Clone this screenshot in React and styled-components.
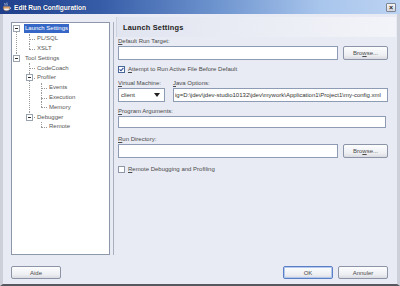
import React from "react";
import styled, { createGlobalStyle } from "styled-components";

const GlobalStyle = createGlobalStyle`
  html, body {
    margin: 0;
    padding: 0;
    background: #e8ebf4;
  }
  body {
    font-family: "Liberation Sans", Arial, sans-serif;
  }
`;

const Window = styled.div`
  width: 400px;
  height: 286px;
  display: flex;
  flex-direction: column;
  overflow: hidden;
  background: #e8ebf4;
`;

const TitleBar = styled.div`
  height: 14px;
  flex: none;
  display: flex;
  align-items: center;
  gap: 2px;
  padding: 0 4px 0 2px;
  background: linear-gradient(to right, #1f3f8b 0%, #365ca8 25%, #7096d0 55%, #a8c5ec 80%, #bcd3f2 100%);
  color: #fff;
  font-weight: bold;
  font-size: 6.6px;
`;

const Title = styled.span`
  flex: 1;
  text-shadow: 0 0 1px #0d2458;
`;

const CloseButton = styled.span`
  width: 10px;
  height: 9px;
  box-sizing: border-box;
  display: flex;
  align-items: center;
  justify-content: center;
  border: 1px solid #7d8594;
  border-radius: 1px;
  background: linear-gradient(#f4f4f4, #d6d8de);
  color: #222;
  font-size: 7px;
  font-weight: bold;
  line-height: 1;
`;

const Frame = styled.div`
  flex: 1;
  display: flex;
  flex-direction: column;
  border-left: 3px solid #cdd0d8;
  border-right: 3px solid #cdd0d8;
  border-bottom: 2px solid #55585f;
`;

const Body = styled.div`
  flex: 1;
  display: flex;
  padding-left: 8px;
  padding-right: 1px;
`;

const TreeBox = styled.div`
  width: 99px;
  height: 233px;
  margin-top: 8px;
  box-sizing: border-box;
  padding-top: 1px;
  background: #fff;
  border: 1px solid #8d97aa;
  font-size: 6px;
  color: #555;
`;

const Branches = styled.ul`
  list-style: none;
  margin: 0;
  padding: 0 0 0 ${(p) => p.$indent}px;
`;

const Item = styled.li`
  position: relative;

  &::before {
    content: "";
    position: absolute;
    left: 0;
    top: 0;
    bottom: 0;
    border-left: 1px dotted #9a9a9a;
  }

  &:first-child::before {
    top: ${(p) => (p.$root ? "5px" : "0")};
  }

  &:last-child::before {
    bottom: auto;
    height: 5px;
  }

  &::after {
    content: "";
    display: ${(p) => (p.$root ? "none" : "block")};
    position: absolute;
    left: 0;
    top: 5px;
    width: 6px;
    border-top: 1px dotted #9a9a9a;
  }
`;

const Row = styled.div`
  height: 9.8px;
  display: flex;
  align-items: center;
  padding-left: ${(p) => p.$pad}px;
  white-space: nowrap;
`;

const Toggle = styled.span`
  position: relative;
  z-index: 1;
  flex: none;
  box-sizing: border-box;
  width: 7px;
  height: 7px;
  margin-left: -3px;
  margin-right: ${(p) => p.$gap}px;
  background: #fff;
  border: 1px solid #9aa3b0;

  &::after {
    content: "";
    position: absolute;
    left: 1px;
    right: 1px;
    top: 2px;
    height: 1px;
    background: #2c2c2c;
  }
`;

const NodeLabel = styled.span`
  position: relative;
  z-index: 1;
  height: 9px;
  line-height: 9px;
  padding: 0 1px;
  margin-left: -1px;
  background: ${(p) => (p.$selected ? "#3667c6" : "transparent")};
  color: ${(p) => (p.$selected ? "#fff" : "inherit")};
`;

const Splitter = styled.div`
  width: 6px;
  flex: none;
  display: flex;
  justify-content: center;

  &::before {
    content: "";
    width: 1px;
    margin-top: 8px;
    height: 233px;
    background: #a8afbd;
  }
`;

const Content = styled.div`
  flex: 1;
  display: flex;
  flex-direction: column;
  padding-top: 3px;
`;

const Header = styled.div`
  height: 20px;
  display: flex;
  align-items: center;
  padding-left: 6px;
  border-left: 1px solid #cdd2de;
  background: linear-gradient(to right, #e1e5f0, #f3f4f9);
  font-size: 7.4px;
  font-weight: bold;
  color: #1d1d1d;
  letter-spacing: 0.2px;
`;

const Form = styled.div`
  display: flex;
  flex-direction: column;
  padding: 0 8px 0 2px;
  font-size: 6px;
  color: #4a4a4a;
`;

const Label = styled.div`
  height: 8px;
  line-height: 8px;
  margin-top: ${(p) => p.$top || 0}px;
  white-space: nowrap;
`;

const FieldRow = styled.div`
  display: flex;
  gap: 5px;
  margin-top: 1px;
`;

const TextBox = styled.div`
  flex: 1;
  min-width: 0;
  height: ${(p) => p.$h || 14}px;
  box-sizing: border-box;
  margin-right: ${(p) => p.$inset || 0}px;
  display: flex;
  align-items: center;
  padding: 0 1px;
  overflow: hidden;
  white-space: nowrap;
  background: #fff;
  border: 1px solid #8e9bb4;
  color: #333;
`;

const Button = styled.div`
  width: ${(p) => p.$w || 50}px;
  height: ${(p) => p.$h || 13}px;
  flex: none;
  box-sizing: border-box;
  display: flex;
  align-items: center;
  justify-content: center;
  border: 1px solid ${(p) => (p.$primary ? "#5b7fc5" : "#8b95a7")};
  border-radius: 2px;
  box-shadow: ${(p) => (p.$primary ? "inset 0 0 0 1px #b3c8ec" : "none")};
  background: linear-gradient(#fdfdfe, #eceef2 70%, #d9dbe1);
  color: #4a4a4a;
  font-size: 6px;
`;

const CheckRow = styled.div`
  height: 10px;
  display: flex;
  align-items: center;
  gap: 3px;
  margin-top: ${(p) => p.$top}px;
  white-space: nowrap;
`;

const Check = styled.span`
  width: 7px;
  height: 7px;
  flex: none;
  box-sizing: border-box;
  display: flex;
  align-items: center;
  justify-content: center;
  background: #fff;
  border: 1px solid ${(p) => (p.$checked ? "#4a679a" : "#8d97a8")};
`;

const Columns = styled.div`
  display: grid;
  grid-template-columns: 47px 1fr;
  column-gap: 8px;
  margin-top: ${(p) => p.$top || 0}px;
`;

const Select = styled(TextBox)`
  justify-content: space-between;
  padding: 0 4px 0 2px;

  &::after {
    content: "";
    border-left: 3.5px solid transparent;
    border-right: 3.5px solid transparent;
    border-top: 4px solid #222;
  }
`;

const Footer = styled.div`
  height: 29px;
  flex: none;
  box-sizing: border-box;
  display: flex;
  gap: 5px;
  padding: 11px 9px 0 8px;
`;

const Spacer = styled.div`
  flex: 1;
`;

const tree = [
  {
    label: "Launch Settings",
    selected: true,
    children: [{ label: "PL/SQL" }, { label: "XSLT" }],
  },
  {
    label: "Tool Settings",
    children: [
      { label: "CodeCoach" },
      {
        label: "Profiler",
        children: [{ label: "Events" }, { label: "Execution" }, { label: "Memory" }],
      },
      { label: "Debugger", children: [{ label: "Remote" }] },
    ],
  },
];

const TreeNode = ({ node, root }) => {
  const textAt = root ? 9 : 8;
  const branch = node.children && node.children.length > 0;
  return (
    <Item $root={root}>
      <Row $pad={branch ? 0 : textAt}>
        {branch && <Toggle $gap={textAt - 4} />}
        <NodeLabel $selected={node.selected}>{node.label}</NodeLabel>
      </Row>
      {branch && (
        <Branches $indent={textAt + 4}>
          {node.children.map((child) => (
            <TreeNode key={child.label} node={child} />
          ))}
        </Branches>
      )}
    </Item>
  );
};

const CupIcon = () => (
  <svg width="10" height="10" viewBox="0 0 10 10">
    <path d="M3 1 C2.4 2 3.6 2.6 3 3.6 M5 0.6 C4.4 1.8 5.6 2.4 5 3.6" stroke="#e8eefc" strokeWidth="0.7" fill="none" />
    <path d="M1.5 4.5 H7.5 V6.6 C7.5 8 6.3 8.8 4.5 8.8 C2.7 8.8 1.5 8 1.5 6.6 Z" fill="#f2f2f2" stroke="#8a5a2a" strokeWidth="0.5" />
    <path d="M7.5 5.2 C9 5.2 9 7.2 7.3 7.2" stroke="#f2f2f2" strokeWidth="0.8" fill="none" />
    <rect x="1.6" y="5.3" width="5.8" height="1.1" fill="#d0782c" />
  </svg>
);

const Tick = () => (
  <svg width="5" height="5" viewBox="0 0 5 5">
    <path d="M0.6 2.4 L2 3.8 L4.4 0.9" stroke="#27478f" strokeWidth="1.1" fill="none" />
  </svg>
);

const App = () => (
  <>
    <GlobalStyle />
    <Window>
      <TitleBar>
        <CupIcon />
        <Title>Edit Run Configuration</Title>
        <CloseButton>×</CloseButton>
      </TitleBar>
      <Frame>
        <Body>
          <TreeBox>
            <Branches $indent={4}>
              {tree.map((node) => (
                <TreeNode key={node.label} node={node} root />
              ))}
            </Branches>
          </TreeBox>
          <Splitter />
          <Content>
            <Header>Launch Settings</Header>
            <Form>
              <Label>
                <u>D</u>efault Run Target:
              </Label>
              <FieldRow>
                <TextBox />
                <Button $w={45} $h={14}>
                  Bro<u>w</u>se...
                </Button>
              </FieldRow>
              <CheckRow $top={4}>
                <Check $checked>
                  <Tick />
                </Check>
                <span>
                  <u>A</u>ttempt to Run Active File Before Default
                </span>
              </CheckRow>
              <Columns $top={5}>
                <Label>
                  <u>V</u>irtual Machine:
                </Label>
                <Label>
                  <u>J</u>ava Options:
                </Label>
              </Columns>
              <Columns $top={1}>
                <Select>client</Select>
                <TextBox>ig=D:\jdev\jdev-studio10132\jdev\mywork\Application1\Project1\my-config.xml</TextBox>
              </Columns>
              <Label $top={5}>
                <u>P</u>rogram Arguments:
              </Label>
              <FieldRow>
                <TextBox $h={12} $inset={2} />
              </FieldRow>
              <Label $top={7}>
                <u>R</u>un Directory:
              </Label>
              <FieldRow>
                <TextBox />
                <Button $w={45} $h={14}>
                  Bro<u>w</u>se...
                </Button>
              </FieldRow>
              <CheckRow $top={6}>
                <Check />
                <span>
                  <u>R</u>emote Debugging and Profiling
                </span>
              </CheckRow>
            </Form>
          </Content>
        </Body>
        <Footer>
          <Button>Aide</Button>
          <Spacer />
          <Button $primary>OK</Button>
          <Button>Annuler</Button>
        </Footer>
      </Frame>
    </Window>
  </>
);

export default App;
